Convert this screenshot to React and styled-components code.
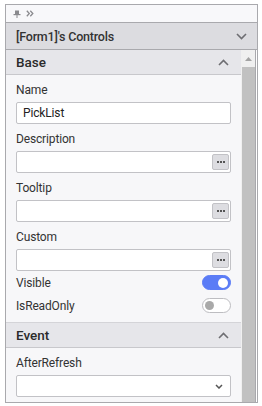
import React from "react";
import styled, { createGlobalStyle } from "styled-components";

const Global = createGlobalStyle`
  html, body { margin: 0; padding: 0; background: #ffffff; }
  body { font-family: Roboto, "Open Sans", sans-serif; color: #333; }
  * { box-sizing: border-box; }
`;

const Frame = styled.div`
  margin: 4px 0 0 5px;
  width: 253px;
  height: 399px;
  border: 1px solid #a9a9ad;
  display: flex;
  flex-direction: column;
  background: #f7f7f9;
  overflow: hidden;
`;

const Toolbar = styled.div`
  height: 18px;
  flex: none;
  background: #f8f8fa;
  border-bottom: 1px solid #a9a9ad;
  display: flex;
  align-items: center;
  gap: 5px;
  padding-left: 7px;
`;

const TitleBar = styled.div`
  height: 27px;
  flex: none;
  background: #dcdce0;
  border-bottom: 1px solid #a9a9ad;
  display: flex;
  align-items: center;
  justify-content: space-between;
  padding: 0 10px 0 10px;
  font-size: 12.5px;
  font-weight: 500;
  letter-spacing: -0.2px;
  color: #333;
`;

const Body = styled.div`
  flex: 1;
  display: flex;
  min-height: 0;
`;

const Content = styled.div`
  flex: 1;
  min-width: 0;
  background: #f7f7f9;
`;

const Scrollbar = styled.div`
  width: 16px;
  flex: none;
  background: #f0f0f0;
  display: flex;
  flex-direction: column;
  padding: 0 2px 0 1px;
  box-shadow: inset -1px 0 #ffffff, inset -2px 0 #a9a9ad;
`;

const ScrollArrow = styled.div`
  height: 17px;
  width: 13px;
  display: flex;
  align-items: center;
  justify-content: center;
`;

const Thumb = styled.div`
  flex: 1;
  width: 13px;
  background: #c1c1c1;
`;

const SectionHeader = styled.div`
  height: ${(p) => (p.$top ? 26 : 25)}px;
  background: #e6e6ea;
  border-bottom: 1px solid #c8c8cc;
  border-top: ${(p) => (p.$top ? "1px solid #d4d4d8" : "none")};
  display: flex;
  align-items: center;
  justify-content: space-between;
  padding: 0 12px 0 10px;
  font-size: 13.5px;
  font-weight: 500;
  color: #2b2b2b;
`;

const Fields = styled.div`
  padding: ${(p) => p.$pt}px 10px ${(p) => p.$pb}px 10px;
  display: flex;
  flex-direction: column;
  gap: 7px;
`;

const ToggleList = styled.div`
  display: flex;
  flex-direction: column;
  margin-top: -7px;
`;

const Label = styled.div`
  font-size: 12px;
  letter-spacing: -0.15px;
  line-height: 16px;
  height: 16px;
  margin-bottom: 4px;
  color: #333;
`;

const Field = styled.div`
  display: flex;
  flex-direction: column;
`;

const InputBox = styled.div`
  height: 22px;
  width: 215px;
  background: #fff;
  border: 1px solid #c2c2c6;
  border-radius: 2px;
  display: flex;
  align-items: center;
  justify-content: space-between;
  padding: 0 1px 0 6px;
  font-size: 12px;
  letter-spacing: -0.15px;
  color: #222;
`;

const Ellipsis = styled.div`
  width: 17px;
  height: 16px;
  background: #dddde1;
  border: 1px solid #c2c2c6;
  border-radius: 2px;
  display: flex;
  align-items: center;
  justify-content: center;
  gap: 1px;
  & > span {
    width: 2px;
    height: 2px;
    background: #555;
  }
`;

const ToggleRow = styled.div`
  height: 23px;
  display: flex;
  align-items: center;
  justify-content: space-between;
  width: 215px;
  font-size: 12px;
  letter-spacing: -0.15px;
  color: #333;
`;

const Switch = styled.div`
  width: 29px;
  height: 15px;
  border-radius: 8px;
  border: 1px solid ${(p) => (p.$on ? "#5b7cf6" : "#bdbdc1")};
  background: ${(p) => (p.$on ? "#5b7cf6" : "#ffffff")};
  display: flex;
  align-items: center;
  justify-content: ${(p) => (p.$on ? "flex-end" : "flex-start")};
  padding: 0 2px;
  & > span {
    width: ${(p) => (p.$on ? 10 : 9)}px;
    height: ${(p) => (p.$on ? 10 : 9)}px;
    border-radius: 50%;
    background: ${(p) => (p.$on ? "#ffffff" : "#a9a9a9")};
  }
`;

const SelectArrow = styled.span`
  display: flex;
  margin-right: 6px;
`;

const Chevron = ({ dir = "down", color = "#6e6e72" }) => (
  <svg width="11" height="7" viewBox="0 0 11 7">
    <path
      d={dir === "down" ? "M1 1 L5.5 5.5 L10 1" : "M1 6 L5.5 1.5 L10 6"}
      fill="none"
      stroke={color}
      strokeWidth="1.6"
    />
  </svg>
);

const SmallChevron = () => (
  <svg width="8" height="5" viewBox="0 0 8 5">
    <path d="M1 1 L4 4 L7 1" fill="none" stroke="#555" strokeWidth="1.5" />
  </svg>
);

const Pin = () => (
  <svg width="8" height="8" viewBox="0 0 8 8">
    <rect x="2" y="0.5" width="4" height="3.5" fill="#8a8a8e" />
    <rect x="0.5" y="4" width="7" height="1.2" fill="#8a8a8e" />
    <rect x="3.5" y="5" width="1" height="3" fill="#8a8a8e" />
  </svg>
);

const DoubleArrow = () => (
  <svg width="8" height="7" viewBox="0 0 8 7">
    <path d="M0.8 0.8 L3.3 3.5 L0.8 6.2 M4.3 0.8 L6.8 3.5 L4.3 6.2" fill="none" stroke="#8a8a8e" strokeWidth="1.3" />
  </svg>
);

const UpTriangle = () => (
  <svg width="7" height="4" viewBox="0 0 7 4">
    <path d="M0 4 L3.5 0 L7 4 Z" fill="#a3a3a3" />
  </svg>
);

const EllipsisButton = () => (
  <Ellipsis>
    <span />
    <span />
    <span />
  </Ellipsis>
);

const TextField = ({ label, value, button, select }) => (
  <Field>
    <Label>{label}</Label>
    <InputBox>
      <span>{value}</span>
      {button && <EllipsisButton />}
      {select && (
        <SelectArrow>
          <SmallChevron />
        </SelectArrow>
      )}
    </InputBox>
  </Field>
);

export default function App() {
  return (
    <>
      <Global />
      <Frame>
        <Toolbar>
          <Pin />
          <DoubleArrow />
        </Toolbar>
        <TitleBar>
          <span>[Form1]'s Controls</span>
          <Chevron dir="down" />
        </TitleBar>
        <Body>
          <Content>
            <SectionHeader>
              <span>Base</span>
              <Chevron dir="up" />
            </SectionHeader>
            <Fields $pt={7} $pb={5}>
              <TextField label="Name" value="PickList" />
              <TextField label="Description" button />
              <TextField label="Tooltip" button />
              <TextField label="Custom" button />
              <ToggleList>
                <ToggleRow>
                  <span>Visible</span>
                  <Switch $on>
                    <span />
                  </Switch>
                </ToggleRow>
                <ToggleRow>
                  <span>IsReadOnly</span>
                  <Switch>
                    <span />
                  </Switch>
                </ToggleRow>
              </ToggleList>
            </Fields>
            <SectionHeader $top>
              <span>Event</span>
              <Chevron dir="up" />
            </SectionHeader>
            <Fields $pt={7} $pb={4}>
              <TextField label="AfterRefresh" select />
            </Fields>
          </Content>
          <Scrollbar>
            <ScrollArrow>
              <UpTriangle />
            </ScrollArrow>
            <Thumb />
          </Scrollbar>
        </Body>
      </Frame>
    </>
  );
}
